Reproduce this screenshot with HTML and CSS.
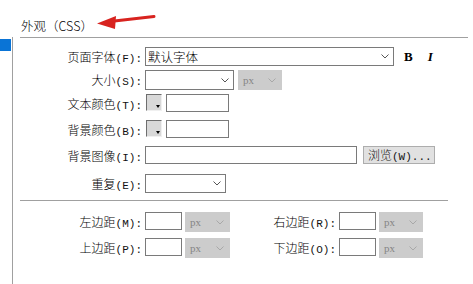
FILE: index.html
```html
<!DOCTYPE html>
<html lang="zh">
<head>
<meta charset="utf-8">
<link rel="stylesheet" href="styles.css">
</head>
<body>
<div class="page">
  <div class="side"><div class="sel"></div></div>
  <div class="main">
    <div class="head"><span class="title">外观（CSS）</span></div>
    <div class="form1">
      <div class="lbl">页面字体<span class="k">(F):</span></div>
      <div class="ctl">
        <div class="select w-font"><span class="val">默认字体</span><svg class="chev" width="8" height="5" viewBox="0 0 8 5"><polyline points="0.5,0.5 4,4 7.5,0.5" fill="none" stroke="#555" stroke-width="1"/></svg></div>
        <span class="bold">B</span><span class="ital">I</span>
      </div>
      <div class="lbl">大小<span class="k">(S):</span></div>
      <div class="ctl">
        <div class="select w-size h20"><span class="val"></span><svg class="chev" width="8" height="5" viewBox="0 0 8 5"><polyline points="0.5,0.5 4,4 7.5,0.5" fill="none" stroke="#555" stroke-width="1"/></svg></div>
        <div class="px w-px h20"><span>px</span><svg class="chev" width="8" height="5" viewBox="0 0 8 5"><polyline points="0.5,0.5 4,4 7.5,0.5" fill="none" stroke="#a8a8a8" stroke-width="1"/></svg></div>
      </div>
      <div class="lbl">文本颜色<span class="k">(T):</span></div>
      <div class="ctl"><div class="swatch"></div><div class="input w-color"></div></div>
      <div class="lbl">背景颜色<span class="k">(B):</span></div>
      <div class="ctl"><div class="swatch"></div><div class="input w-color"></div></div>
      <div class="lbl">背景图像<span class="k">(I):</span></div>
      <div class="ctl"><div class="input w-img"></div><div class="btn">浏览<span class="k">(W)...</span></div></div>
      <div class="lbl">重复<span class="k">(E):</span></div>
      <div class="ctl">
        <div class="select w-rep"><span class="val"></span><svg class="chev" width="8" height="5" viewBox="0 0 8 5"><polyline points="0.5,0.5 4,4 7.5,0.5" fill="none" stroke="#555" stroke-width="1"/></svg></div>
      </div>
    </div>
    <div class="sep"></div>
    <div class="form2">
      <div class="lbl">左边距<span class="k">(M):</span></div>
      <div class="input h20"></div>
      <div class="px h20"><span>px</span><svg class="chev" width="8" height="5" viewBox="0 0 8 5"><polyline points="0.5,0.5 4,4 7.5,0.5" fill="none" stroke="#a8a8a8" stroke-width="1"/></svg></div>
      <div class="lbl">右边距<span class="k">(R):</span></div>
      <div class="input h20"></div>
      <div class="px h20"><span>px</span><svg class="chev" width="8" height="5" viewBox="0 0 8 5"><polyline points="0.5,0.5 4,4 7.5,0.5" fill="none" stroke="#a8a8a8" stroke-width="1"/></svg></div>
      <div class="lbl">上边距<span class="k">(P):</span></div>
      <div class="input h20"></div>
      <div class="px h20"><span>px</span><svg class="chev" width="8" height="5" viewBox="0 0 8 5"><polyline points="0.5,0.5 4,4 7.5,0.5" fill="none" stroke="#a8a8a8" stroke-width="1"/></svg></div>
      <div class="lbl">下边距<span class="k">(O):</span></div>
      <div class="input h20"></div>
      <div class="px h20"><span>px</span><svg class="chev" width="8" height="5" viewBox="0 0 8 5"><polyline points="0.5,0.5 4,4 7.5,0.5" fill="none" stroke="#a8a8a8" stroke-width="1"/></svg></div>
    </div>
  </div>
  <svg class="arrow" width="473" height="40" viewBox="0 0 473 40">
    <line x1="154" y1="16.5" x2="110" y2="21.5" stroke="#d8231f" stroke-width="3" stroke-linecap="round"/>
    <polygon points="97,23.5 116,16 115,29" fill="#d8231f"/>
  </svg>
</div>
</body>
</html>
```

FILE: styles.css
```css
* { box-sizing: border-box; }

body {
  margin: 0;
  background: #fff;
  color: #000;
  font-family: "Noto Sans CJK SC", "Noto Sans", sans-serif;
  font-size: 12px;
  font-weight: 300;
}

.page {
  position: relative;
  display: flex;
  width: 473px;
  height: 284px;
  overflow: hidden;
}

.side {
  width: 13px;
  margin-top: 37px;
  border-right: 1px solid #a0a0a0;
  flex: none;
}

.sel {
  margin-top: 2px;
  width: 11px;
  height: 12px;
  background: #0a74d6;
}

.main {
  padding-left: 7px;
  width: 455px;
}

.head {
  width: 448px;
  height: 38px;
  border-bottom: 1px solid #a0a0a0;
  padding-top: 18px;
}

.title {
  display: block;
  padding-left: 1px;
  line-height: 16px;
  font-size: 12.5px;
}

.form1 {
  display: grid;
  grid-template-columns: 122px auto;
  grid-template-rows: 23px 24px 26px 26px 28px 19px;
  column-gap: 3px;
  margin-top: 9px;
}

.lbl {
  text-align: right;
  line-height: 19px;
  white-space: nowrap;
}

.k {
  font-family: "Liberation Mono", monospace;
  font-size: 11px;
  font-weight: normal;
  color: #111;
}

.ctl {
  display: flex;
  align-items: flex-start;
}

.select {
  display: flex;
  align-items: center;
  justify-content: space-between;
  height: 19px;
  border: 1px solid #7a7a7a;
  background: #fff;
  padding: 0 4px 0 2px;
}

.val {
  line-height: 17px;
  font-size: 12.5px;
}

.chev { display: block; }

.h20 { height: 20px; }

.w-font { width: 249px; }
.w-size { width: 89px; }
.w-rep { width: 81px; }
.w-px { width: 44px; margin-left: 4px; }

.bold {
  margin-left: 10px;
  font-family: "Liberation Serif", serif;
  font-weight: bold;
  font-size: 13px;
  line-height: 19px;
}

.ital {
  margin-left: 15px;
  font-family: "Liberation Serif", serif;
  font-weight: bold;
  font-style: italic;
  font-size: 13px;
  line-height: 19px;
}

.px {
  display: flex;
  align-items: center;
  justify-content: space-between;
  background: #cccccc;
  padding: 0 6px 0 5px;
  color: #858585;
  font-family: "Liberation Serif", serif;
  font-size: 11px;
  font-weight: normal;
}

.px .chev { margin-top: 1px; }

.swatch {
  position: relative;
  width: 16px;
  height: 17px;
  margin: 0 0 0 1px;
  background: #d8d8d8;
  border-style: solid;
  border-width: 1px;
  border-color: #6e6e6e #f0f0f0 #f0f0f0 #6e6e6e;
}

.swatch::after {
  content: "";
  position: absolute;
  right: 1px;
  bottom: 2px;
  border-left: 2.5px solid transparent;
  border-right: 2.5px solid transparent;
  border-top: 3px solid #000;
}

.input {
  height: 18px;
  border: 1px solid #7a7a7a;
  background: #fff;
}

.w-color { width: 63px; margin-left: 4px; }
.w-img { width: 212px; }

.btn {
  margin-left: 6px;
  width: 72px;
  height: 18px;
  background: #e1e1e1;
  border: 1px solid #adadad;
  padding-left: 4px;
  line-height: 16px;
  color: #222;
}

.sep {
  margin-top: 7px;
  width: 428px;
  border-top: 1px solid #a0a0a0;
}

.form2 {
  display: grid;
  grid-template-columns: 122px 37px 45px 103px 37px 44px;
  grid-auto-rows: 20px;
  column-gap: 3px;
  row-gap: 6px;
  margin-top: 11px;
}

.form2 .lbl { line-height: 20px; }

.arrow {
  position: absolute;
  left: 0;
  top: 0;
}
```
